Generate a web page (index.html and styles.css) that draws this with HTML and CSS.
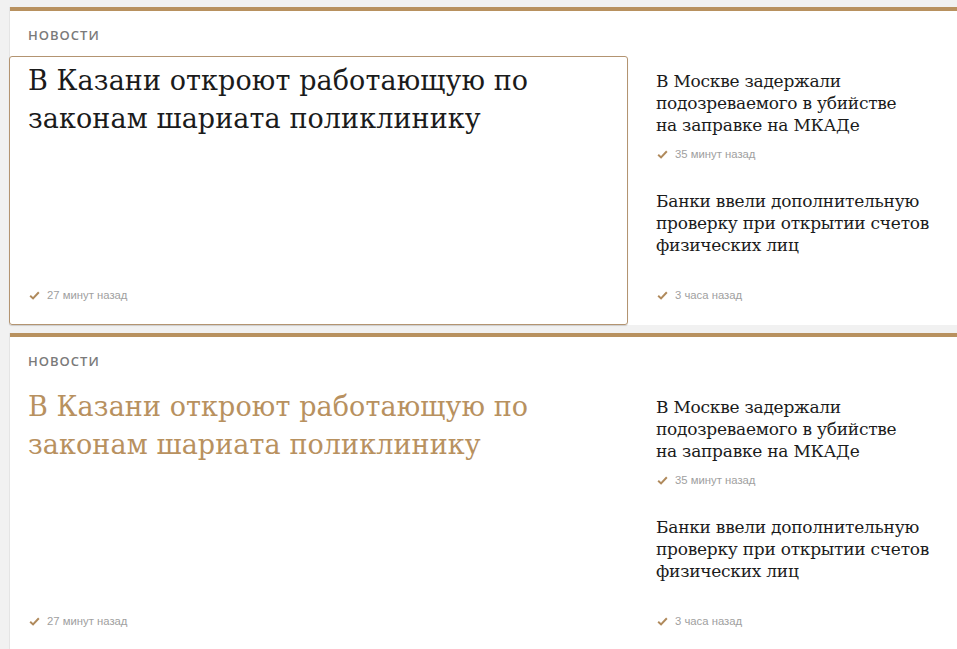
FILE: index.html
```html
<!DOCTYPE html>
<html lang="ru">
<head>
<meta charset="utf-8">
<title>Новости</title>
<link rel="stylesheet" href="styles.css">
</head>
<body>
<section class="card">
  <div class="card-label">Новости</div>
  <div class="card-grid">
    <article class="main-item is-hover">
      <h2 class="main-title">В Казани откроют работающую по законам шариата поликлинику</h2>
      <div class="time"><svg class="check" viewBox="0 0 12 10" width="11" height="9"><path d="M1.2 5.2 L4.4 8.2 L10.8 1.4" fill="none" stroke="currentColor" stroke-width="2.2"/></svg>27 минут назад</div>
    </article>
    <div class="side">
      <article class="side-item first">
        <h3 class="side-title">В Москве задержали подозреваемого в&nbsp;убийстве на&nbsp;заправке на&nbsp;МКАДе</h3>
        <div class="time"><svg class="check" viewBox="0 0 12 10" width="11" height="9"><path d="M1.2 5.2 L4.4 8.2 L10.8 1.4" fill="none" stroke="currentColor" stroke-width="2.2"/></svg>35 минут назад</div>
      </article>
      <article class="side-item last">
        <h3 class="side-title">Банки ввели дополнительную проверку при открытии счетов физических лиц</h3>
        <div class="time"><svg class="check" viewBox="0 0 12 10" width="11" height="9"><path d="M1.2 5.2 L4.4 8.2 L10.8 1.4" fill="none" stroke="currentColor" stroke-width="2.2"/></svg>3 часа назад</div>
      </article>
    </div>
  </div>
</section>
<section class="card">
  <div class="card-label">Новости</div>
  <div class="card-grid">
    <article class="main-item is-accent">
      <h2 class="main-title">В Казани откроют работающую по законам шариата поликлинику</h2>
      <div class="time"><svg class="check" viewBox="0 0 12 10" width="11" height="9"><path d="M1.2 5.2 L4.4 8.2 L10.8 1.4" fill="none" stroke="currentColor" stroke-width="2.2"/></svg>27 минут назад</div>
    </article>
    <div class="side">
      <article class="side-item first">
        <h3 class="side-title">В Москве задержали подозреваемого в&nbsp;убийстве на&nbsp;заправке на&nbsp;МКАДе</h3>
        <div class="time"><svg class="check" viewBox="0 0 12 10" width="11" height="9"><path d="M1.2 5.2 L4.4 8.2 L10.8 1.4" fill="none" stroke="currentColor" stroke-width="2.2"/></svg>35 минут назад</div>
      </article>
      <article class="side-item last">
        <h3 class="side-title">Банки ввели дополнительную проверку при открытии счетов физических лиц</h3>
        <div class="time"><svg class="check" viewBox="0 0 12 10" width="11" height="9"><path d="M1.2 5.2 L4.4 8.2 L10.8 1.4" fill="none" stroke="currentColor" stroke-width="2.2"/></svg>3 часа назад</div>
      </article>
    </div>
  </div>
</section>
</body>
</html>
```
FILE: styles.css
```css
html { overflow: hidden; }
body {
  margin: 0;
  padding: 7px 0 0 10px;
  background: #f1f1f1;
  font-family: "Open Sans", "Liberation Sans", sans-serif;
}
.card {
  width: 960px;
  height: 314px;
  background: #fff;
  border-top: 4px solid #b8915f;
  margin-bottom: 8px;
  box-shadow: -1px 0 0 #e4e4e4;
  display: flex;
  flex-direction: column;
}
.card-label {
  padding: 15px 0 0 18px;
  height: 30px;
  font-size: 13px;
  line-height: 18px;
  font-weight: 600;
  letter-spacing: 1px;
  text-transform: uppercase;
  color: #7a7a7a;
}
.card-grid {
  flex: 1;
  display: flex;
  gap: 28px;
}
.main-item {
  width: 581px;
  margin-left: -1px;
  border: 1px solid transparent;
  border-radius: 3px;
  padding: 5px 18px 21px 18px;
  display: flex;
  flex-direction: column;
}
.main-item.is-hover {
  border-color: #b39471;
  box-shadow: 0 1px 1px rgba(0,0,0,0.15);
}
.main-title {
  margin: 0;
  font-family: "DejaVu Serif", "Liberation Serif", serif;
  font-weight: 400;
  font-size: 27px;
  line-height: 38px;
  letter-spacing: 0.1px;
  color: #1b1b1b;
}
.is-accent .main-title { color: #b8915f; }
.main-item .time { margin-top: auto; }
.side {
  width: 285px;
  display: flex;
  flex-direction: column;
}
.side-item {
  display: flex;
  flex-direction: column;
}
.side-item.first { padding-top: 14px; }
.side-item.last { flex: 1; margin-top: 28px; padding-bottom: 22px; }
.side-item.last .time { margin-top: auto; }
.side-item.first .time { margin-top: 10px; }
.side-title {
  margin: 0;
  font-family: "DejaVu Serif", "Liberation Serif", serif;
  font-weight: 400;
  font-size: 17px;
  line-height: 22px;
  letter-spacing: -0.25px;
  color: #1b1b1b;
}
.time {
  display: flex;
  align-items: center;
  font-family: "Liberation Sans", Arial, sans-serif;
  font-size: 11.3px;
  line-height: 16px;
  color: #a0a0a0;
}
.check {
  color: #b08a5c;
  margin: 0 7px 0 1px;
}
```
